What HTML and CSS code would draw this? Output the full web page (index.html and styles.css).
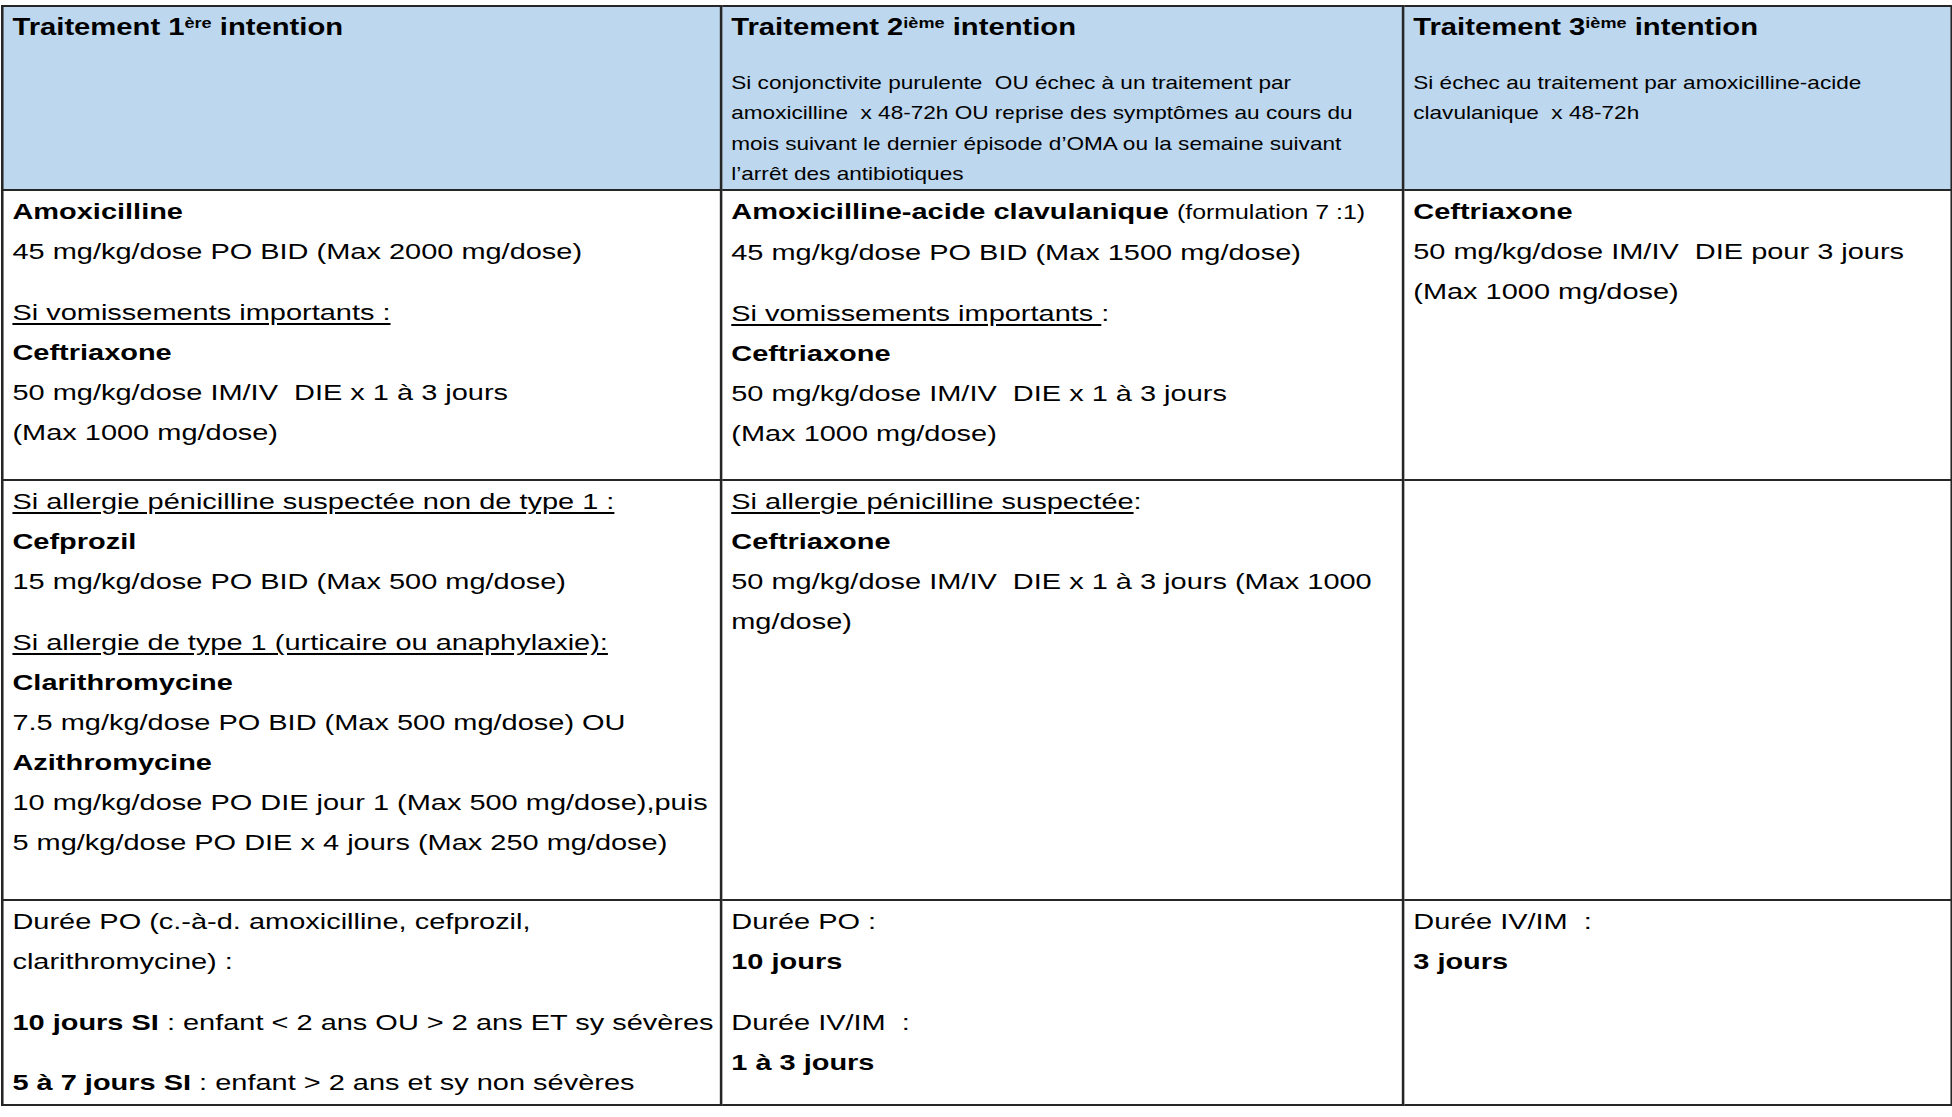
FILE: index.html
```html
<!DOCTYPE html>
<html lang="fr">
<head>
<meta charset="utf-8">
<title>Traitement OMA</title>
<link rel="stylesheet" href="styles.css">
</head>
<body>
<div class="sheet">
<table class="grid">
  <colgroup>
    <col class="c1">
    <col class="c2">
    <col class="c3">
  </colgroup>
  <tr class="r-head">
    <th>
      <div class="title">Traitement 1<sup>ère</sup> intention</div>
    </th>
    <th>
      <div class="title">Traitement 2<sup>ième</sup> intention</div>
      <div class="sub">Si conjonctivite purulente&nbsp; OU échec à un traitement par<br>amoxicilline&nbsp; x 48-72h OU reprise des symptômes au cours du<br>mois suivant le dernier épisode d’OMA ou la semaine suivant<br>l’arrêt des antibiotiques</div>
    </th>
    <th>
      <div class="title">Traitement 3<sup>ième</sup> intention</div>
      <div class="sub">Si échec au traitement par amoxicilline-acide<br>clavulanique&nbsp; x 48-72h</div>
    </th>
  </tr>
  <tr class="r-a">
    <td>
      <div class="ln"><b>Amoxicilline</b></div>
      <div class="ln">45 mg/kg/dose PO BID (Max 2000 mg/dose)</div>
      <div class="ln gap"><u>Si vomissements importants :</u></div>
      <div class="ln"><b>Ceftriaxone</b></div>
      <div class="ln">50 mg/kg/dose IM/IV&nbsp; DIE x 1 à 3 jours</div>
      <div class="ln">(Max 1000 mg/dose)</div>
    </td>
    <td>
      <div class="ln"><b>Amoxicilline-acide clavulanique</b> <span class="small">(formulation 7 :1)</span></div>
      <div class="ln">45 mg/kg/dose PO BID (Max 1500 mg/dose)</div>
      <div class="ln gap"><u>Si vomissements importants </u>:</div>
      <div class="ln"><b>Ceftriaxone</b></div>
      <div class="ln">50 mg/kg/dose IM/IV&nbsp; DIE x 1 à 3 jours</div>
      <div class="ln">(Max 1000 mg/dose)</div>
    </td>
    <td>
      <div class="ln"><b>Ceftriaxone</b></div>
      <div class="ln">50 mg/kg/dose IM/IV&nbsp; DIE pour 3 jours</div>
      <div class="ln">(Max 1000 mg/dose)</div>
    </td>
  </tr>
  <tr class="r-b">
    <td>
      <div class="ln"><u>Si allergie pénicilline suspectée non de type 1 :</u></div>
      <div class="ln"><b>Cefprozil</b></div>
      <div class="ln">15 mg/kg/dose PO BID (Max 500 mg/dose)</div>
      <div class="ln gap"><u>Si allergie de type 1 (urticaire ou anaphylaxie):</u></div>
      <div class="ln"><b>Clarithromycine</b></div>
      <div class="ln">7.5 mg/kg/dose PO BID (Max 500 mg/dose) OU</div>
      <div class="ln"><b>Azithromycine</b></div>
      <div class="ln">10 mg/kg/dose PO DIE jour 1 (Max 500 mg/dose),puis</div>
      <div class="ln">5 mg/kg/dose PO DIE x 4 jours (Max 250 mg/dose)</div>
    </td>
    <td>
      <div class="ln"><u>Si allergie pénicilline suspectée</u>:</div>
      <div class="ln"><b>Ceftriaxone</b></div>
      <div class="ln">50 mg/kg/dose IM/IV&nbsp; DIE x 1 à 3 jours (Max 1000</div>
      <div class="ln">mg/dose)</div>
    </td>
    <td></td>
  </tr>
  <tr class="r-c">
    <td>
      <div class="ln">Durée PO (c.-à-d. amoxicilline, cefprozil,</div>
      <div class="ln">clarithromycine) :</div>
      <div class="ln gap"><b>10 jours SI</b> : enfant &lt; 2 ans OU &gt; 2 ans ET sy sévères</div>
      <div class="ln gap2"><b>5 à 7 jours SI</b> : enfant &gt; 2 ans et sy non sévères</div>
    </td>
    <td>
      <div class="ln">Durée PO :</div>
      <div class="ln"><b>10 jours</b></div>
      <div class="ln gap">Durée IV/IM&nbsp; :</div>
      <div class="ln"><b>1 à 3 jours</b></div>
    </td>
    <td>
      <div class="ln">Durée IV/IM&nbsp; :</div>
      <div class="ln"><b>3 jours</b></div>
    </td>
  </tr>
</table>
</div>
</body>
</html>
```

FILE: styles.css
```css
html, body {
  margin: 0;
  padding: 0;
  background: #ffffff;
}

body {
  font-family: "Liberation Sans", Arial, sans-serif;
  color: #000000;
}

.sheet {
  width: 1535px;
  margin: 5px 0 0 1px;
  transform: scaleX(1.27);
  transform-origin: 0 0;
}

.grid {
  width: 1535px;
  table-layout: fixed;
  border-collapse: collapse;
}

.c1 { width: 566px; }
.c2 { width: 537px; }
.c3 { width: 432px; }

.grid th,
.grid td {
  border: 2px solid #262626;
  padding: 0 7px;
  vertical-align: top;
  text-align: left;
  font-size: 22.8px;
  line-height: 40px;
}

.grid th {
  background: #bdd7ee;
  font-weight: normal;
}

.r-head { height: 180px; }
.r-a { height: 290px; }
.r-b { height: 420px; }
.r-c { height: 205px; }

.title {
  font-weight: bold;
  font-size: 23px;
  white-space: nowrap;
}

.title sup {
  font-size: 0.62em;
  line-height: 0;
  vertical-align: 0.5em;
}

.sub {
  margin-top: 21px;
  font-size: 17.8px;
  line-height: 30.3px;
  white-space: nowrap;
}

.ln {
  white-space: nowrap;
}

.ln.gap { margin-top: 21px; }
.ln.gap2 { margin-top: 20px; }

.small {
  font-size: 19.6px;
}

b { font-weight: bold; }
u { text-underline-offset: 3px; }
```
